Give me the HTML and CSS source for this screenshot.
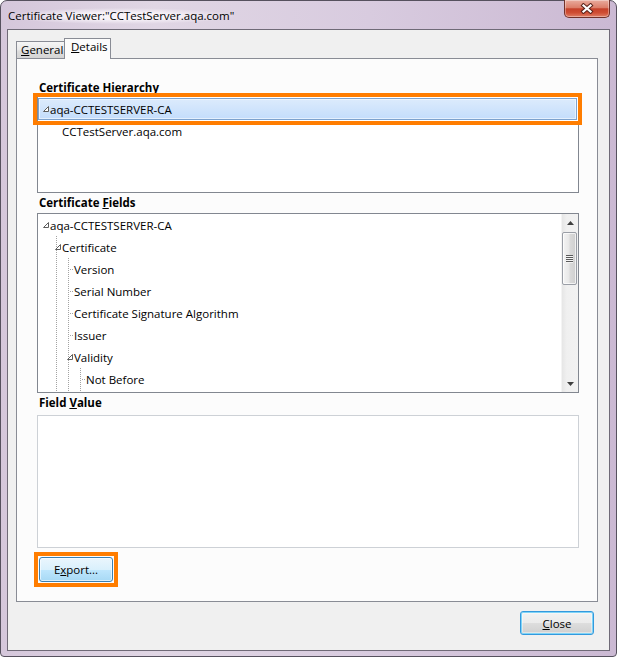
FILE: index.html
```html
<!DOCTYPE html>
<html lang="en">
<head>
    <meta charset="UTF-8">
    <title>Certificate Viewer</title>
    <link rel="stylesheet" href="styles.css">
</head>
<body>

    <div class="window">
        <div class="titlebar">
            <span class="title">Certificate Viewer:"CCTestServer.aqa.com"</span>
            <div class="close-x">
                <svg width="14" height="11" viewBox="0 0 14 11">
                    <path d="M3.5 2.5 L10.5 8.5 M10.5 2.5 L3.5 8.5" stroke="#5a241b" stroke-width="4.2" stroke-linecap="square"/>
                    <path d="M3.5 2.5 L10.5 8.5 M10.5 2.5 L3.5 8.5" stroke="#ffffff" stroke-width="2.2" stroke-linecap="square"/>
                </svg>
            </div>
        </div>

        <div class="client">
            <div class="tabs">
                <div class="tab"><u>G</u>eneral</div>
                <div class="tab active"><u>D</u>etails</div>
            </div>

            <div class="panel">
                <div class="group-label">Certificate <u>H</u>ierarchy</div>
                <div class="listbox hierarchy">
                    <div class="row selected">
                        <span class="cell"><svg class="exp" viewBox="0 0 6 6"><path d="M5.5 0.5 L5.5 5.5 L0.5 5.5 Z"/></svg></span><span class="label">aqa-CCTESTSERVER-CA</span>
                    </div>
                    <div class="row">
                        <span class="cell"></span><span class="cell"></span><span class="label">CCTestServer.aqa.com</span>
                    </div>
                </div>

                <div class="group-label">Certificate <u>F</u>ields</div>
                <div class="listbox fields">
                    <div class="tree">
                        <div class="row"><span class="cell"><svg class="exp" viewBox="0 0 6 6"><path d="M5.5 0.5 L5.5 5.5 L0.5 5.5 Z"/></svg></span><span class="label">aqa-CCTESTSERVER-CA</span></div>
                        <div class="row"><span class="cell"></span><span class="cell v"><svg class="exp" viewBox="0 0 6 6"><path d="M5.5 0.5 L5.5 5.5 L0.5 5.5 Z"/></svg></span><span class="label">Certificate</span></div>
                        <div class="row"><span class="cell"></span><span class="cell v"></span><span class="cell v t"></span><span class="label">Version</span></div>
                        <div class="row"><span class="cell"></span><span class="cell v"></span><span class="cell v t"></span><span class="label">Serial Number</span></div>
                        <div class="row"><span class="cell"></span><span class="cell v"></span><span class="cell v t"></span><span class="label">Certificate Signature Algorithm</span></div>
                        <div class="row"><span class="cell"></span><span class="cell v"></span><span class="cell v t"></span><span class="label">Issuer</span></div>
                        <div class="row"><span class="cell"></span><span class="cell v"></span><span class="cell v"><svg class="exp" viewBox="0 0 6 6"><path d="M5.5 0.5 L5.5 5.5 L0.5 5.5 Z"/></svg></span><span class="label">Validity</span></div>
                        <div class="row"><span class="cell"></span><span class="cell v"></span><span class="cell v"></span><span class="cell v t"></span><span class="label">Not Before</span></div>
                        <div class="row"><span class="cell"></span><span class="cell v"></span><span class="cell v"></span><span class="cell v"></span></div>
                    </div>
                    <div class="vscroll">
                        <div class="sb-arrow"><svg width="7" height="4" viewBox="0 0 7 4"><path d="M3.5 0 L7 4 L0 4 Z" fill="#3f3f3f"/></svg></div>
                        <div class="sb-track">
                            <div class="sb-thumb"><span class="grip"></span></div>
                        </div>
                        <div class="sb-arrow"><svg width="7" height="4" viewBox="0 0 7 4"><path d="M0 0 L7 0 L3.5 4 Z" fill="#3f3f3f"/></svg></div>
                    </div>
                </div>

                <div class="group-label value-label">Field <u>V</u>alue</div>
                <div class="valuebox"></div>

                <div class="export-row">
                    <div class="marked">
                        <button class="btn btn-hot">E<u>x</u>port...</button>
                    </div>
                </div>
            </div>

            <div class="actions">
                <button class="btn btn-default"><u>C</u>lose</button>
            </div>
        </div>
    </div>

</body>
</html>
```

FILE: styles.css
```css
* {
    box-sizing: border-box;
}
html, body {
    margin: 0;
    padding: 0;
}
body {
    width: 617px;
    height: 657px;
    font-family: "Open Sans", "Noto Sans", sans-serif;
    font-size: 11.5px;
    color: #000;
    background: #fff;
}
.window {
    width: 617px;
    height: 657px;
    border: 1px solid #56515e;
    border-radius: 7px 7px 4px 4px;
    background: linear-gradient(to right, #d5c7db 0%, #e0d6e4 25%, #d8cbdf 60%, #cbb9d3 100%);
    display: flex;
    flex-direction: column;
}
.titlebar {
    height: 28px;
    flex: none;
    display: flex;
    justify-content: space-between;
    align-items: flex-start;
    padding: 0 6px 0 7px;
}
.title {
    line-height: 16px;
    margin-top: 7px;
    background: radial-gradient(ellipse at center, rgba(250, 246, 251, 0.9) 30%, rgba(250, 246, 251, 0) 72%);
}
.close-x {
    width: 46px;
    height: 18px;
    margin-top: -1px;
    border: 1px solid #71312a;
    border-top: none;
    border-radius: 0 0 5px 5px;
    background: linear-gradient(#e9ac9e 0%, #dc7e69 45%, #c5412a 52%, #cf4d33 75%, #e07f67 100%);
    box-shadow: inset 0 0 0 1px rgba(255, 255, 255, 0.35);
    display: flex;
    align-items: center;
    justify-content: center;
}
.client {
    flex: 1;
    margin: 0 6px 5px;
    border: 1px solid #6f6a77;
    background: #f0f0f0;
    display: flex;
    flex-direction: column;
}

/* tabs */
.tabs {
    height: 28px;
    flex: none;
    display: flex;
    align-items: flex-end;
    padding-left: 8px;
}
.tab {
    width: 48px;
    height: 17px;
    line-height: 16px;
    padding-left: 4px;
    border: 1px solid #898c95;
    border-bottom: none;
    border-right: none;
    background: linear-gradient(#f6f6f6, #e9e9e9 50%, #dedede 55%, #d4d4d4);
    white-space: nowrap;
}
.tab.active {
    width: 47px;
    height: 21px;
    padding-left: 6px;
    border-right: 1px solid #898c95;
    margin-bottom: -1px;
    background: #fcfcfc;
    position: relative;
    z-index: 1;
}
.panel {
    margin: 0 11px 0 8px;
    border: 1px solid #898c95;
    background: #fcfcfc;
    padding: 20px 18px 14px 20px;
}
.group-label {
    font-weight: bold;
    line-height: 17px;
    padding-left: 2px;
}
.listbox {
    border: 1px solid #828790;
    background: #fff;
}
.hierarchy {
    height: 97px;
    margin-bottom: 1px;
}
.fields {
    height: 180px;
    margin-top: 2px;
    display: flex;
}
.value-label {
    margin-top: 1px;
    margin-bottom: 4px;
}
.valuebox {
    height: 133px;
    border: 1px solid #cdd1d6;
    background: #fff;
}

/* tree rows */
.tree {
    flex: 1;
    overflow: hidden;
}
.row {
    display: flex;
    align-items: center;
    height: 22px;
    padding-left: 1px;
    white-space: nowrap;
}
.row .label {
    margin-left: 1px;
}
.row.selected {
    margin: 1px 1px 0 0;
    padding-left: 0;
    border: 1px solid #7da2ce;
    background: linear-gradient(#dcebfc, #c4ddfc);
    box-shadow: inset 0 0 0 1px rgba(255, 255, 255, 0.55);
    outline: 4px solid #ff7d00;
    outline-offset: 1px;
}
.cell {
    width: 12px;
    align-self: stretch;
    flex: none;
    position: relative;
    display: flex;
    align-items: center;
    padding-left: 6px;
}
.cell:first-child {
    margin-left: -2px;
}
.cell.v::before {
    content: "";
    position: absolute;
    left: 7px;
    top: 0;
    bottom: 0;
    width: 1px;
    background: repeating-linear-gradient(to bottom, #a3a3a3 0 1px, transparent 1px 2px);
}
.cell.t::after {
    content: "";
    position: absolute;
    left: 8px;
    top: 11px;
    width: 4px;
    height: 1px;
    background: repeating-linear-gradient(to right, transparent 0 1px, #a3a3a3 1px 2px);
}
.exp {
    width: 6px;
    height: 6px;
    display: block;
    position: relative;
}
.exp path {
    fill: #fff;
    stroke: #5e5e5e;
    stroke-width: 1;
}

/* scrollbar */
.vscroll {
    width: 17px;
    flex: none;
    display: flex;
    flex-direction: column;
    background: linear-gradient(to right, #e6e6e6, #f0f0f0 30%, #f2f2f2);
    border-left: 1px solid #f4f4f4;
}
.sb-arrow {
    height: 17px;
    display: flex;
    align-items: center;
    justify-content: center;
}
.sb-track {
    flex: 1;
    padding: 1px 1px 0 0;
}
.sb-thumb {
    height: 53px;
    border: 1px solid #9a9ea6;
    border-radius: 2px;
    background: linear-gradient(to right, #f4f4f4, #e8e8e8 45%, #d9d9d9 55%, #cfcfcf);
    box-shadow: inset 0 0 0 1px rgba(255, 255, 255, 0.7);
    display: flex;
    align-items: center;
    justify-content: center;
}
.grip {
    width: 7px;
    height: 8px;
    background: repeating-linear-gradient(to bottom, #5a5a5a 0 1px, #f4f4f4 1px 2px);
}

/* buttons */
.btn {
    width: 74px;
    height: 25px;
    padding: 0;
    font-family: inherit;
    font-size: 11.5px;
    color: #000;
    border-radius: 3px;
    cursor: default;
    display: block;
}
.export-row {
    margin-top: 4px;
    display: flex;
}
.marked {
    margin-left: -3px;
    border: 4px solid #ff7d00;
    padding: 1px;
}
.btn-hot {
    border: 1px solid #3c7fb1;
    background: linear-gradient(#eaf6fd 0%, #d9f0fc 50%, #bee6fd 52%, #a7d9f5 100%);
    box-shadow: inset 0 0 0 1px rgba(255, 255, 255, 0.6);
}
.actions {
    display: flex;
    justify-content: flex-end;
    padding: 9px 15px 15px;
}
.btn-default {
    height: 24px;
    border: 1px solid #3399dd;
    background: linear-gradient(#f2f2f2 0%, #ebebeb 50%, #dddddd 52%, #cfcfcf 100%);
    box-shadow: inset 0 0 0 1px #7fd4f7, inset 0 0 0 2px rgba(255, 255, 255, 0.4);
}
```
